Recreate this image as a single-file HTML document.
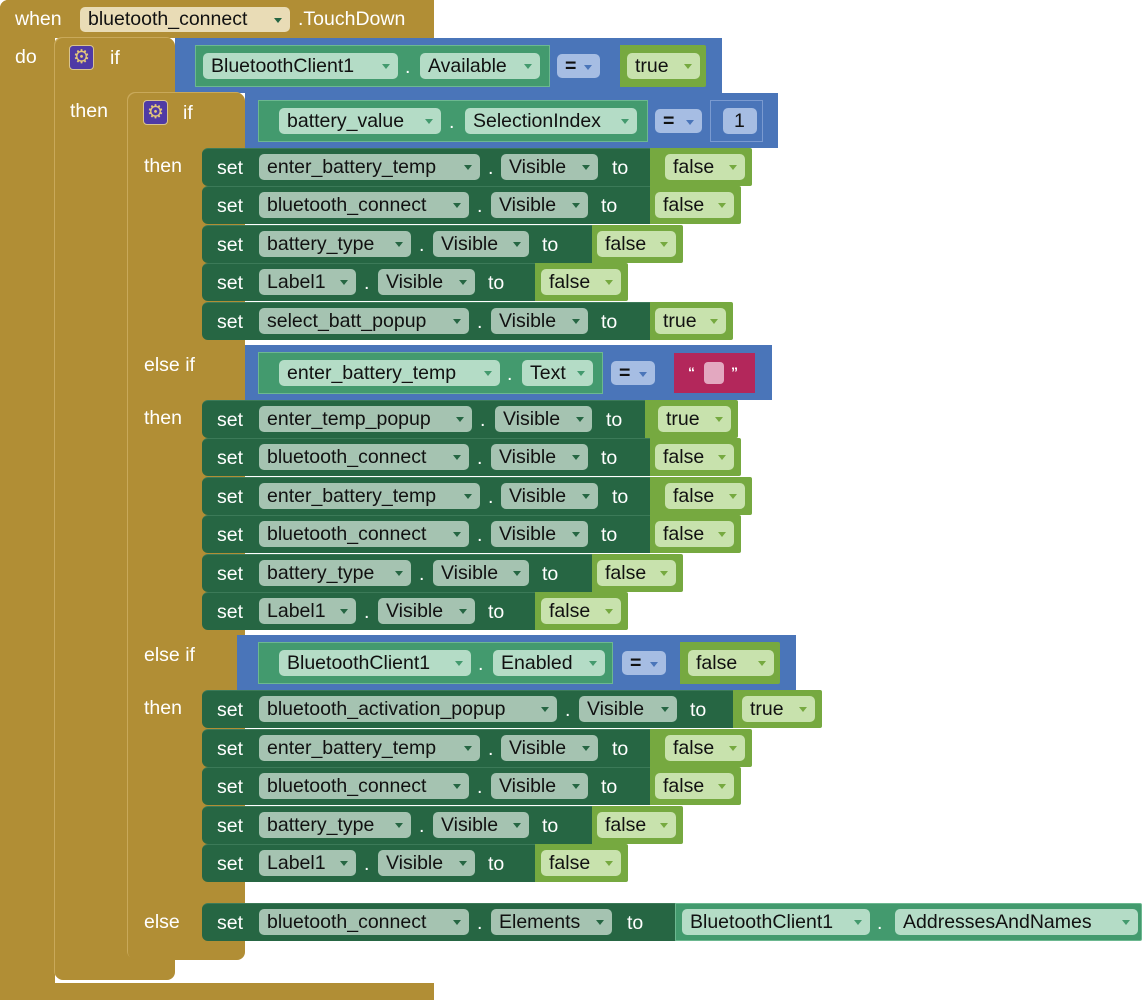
<!DOCTYPE html>
<html><head><meta charset="utf-8"><style>
body{margin:0;width:1146px;height:1000px;position:relative;background:#fff;overflow:hidden;font-family:"Liberation Sans",Arial,sans-serif}
div,span{box-sizing:border-box}
.g{position:absolute;background:#b18e35}
.r{position:absolute;left:0;width:1146px;height:38px}
.set{position:absolute;left:202px;top:0;height:38px;background:#266643;border-radius:6px 0 0 6px;border-top:1px solid #3c7a58}
.t{position:absolute;color:#fff;font-size:19.5px;line-height:24px;top:8px;white-space:nowrap}
.p{position:absolute;top:6px;height:26px;border-radius:5px;background:#a5c3b1;font-size:19.5px;line-height:27px;padding-left:8px;color:#111;white-space:nowrap}
.p::after{content:"";position:absolute;right:8px;top:11px;border-left:4px solid transparent;border-right:4px solid transparent;border-top:5px solid #266643}
.nop::after{display:none}
.bool{position:absolute;top:0;height:38px;background:#76a940;border-radius:0 2px 2px 0}
.bp{background:#c8e2ad}
.bp::after{border-top-color:#76a940}
.cp{background:#b4dcc6}
.cp::after{border-top-color:#439a6e}
.ep{background:#a6bde3}
.ep::after{border-top-color:#4a75b9}
.blue{position:absolute;background:#4a75b9;height:55px}
.comp{position:absolute;background:#439a6e;height:42px;border:1px solid #6cb890}
.gear{position:absolute;width:25px;height:25px;background:#4f3aa5;border:1px solid #d8c490;border-radius:4px;color:#e3c77a;font-family:"DejaVu Sans",sans-serif;font-size:19px;line-height:23px;text-align:center}
.w{position:absolute;color:#fff;font-size:19.5px;line-height:24px}
</style></head><body>

<div class="g" style="left:0;top:0;width:434px;height:38px;border-radius:8px 0 0 0"></div>
<div class="g" style="left:0;top:0;width:55px;height:1000px;border-radius:8px 0 0 0"></div>
<div class="g" style="left:0;top:983px;width:434px;height:17px"></div>
<span class="w" style="left:15px;top:7px">when</span>
<div class="p" style="left:80px;top:7px;width:210px;height:25px;background:#e9dcb6;line-height:25px">bluetooth_connect</div>
<span class="w" style="left:298px;top:7px">.TouchDown</span>
<span class="w" style="left:15px;top:45px">do</span>

<div class="g" style="left:55px;top:38px;width:120px;height:942px;border-radius:8px;box-shadow:-1px -1px 0 #c9a95a"></div>
<div class="gear" style="left:69px;top:45px">⚙</div>
<span class="w" style="left:110px;top:46px">if</span>
<span class="w" style="left:70px;top:99px">then</span>

<div class="blue" style="left:175px;top:38px;width:547px"></div>
<div class="comp" style="left:195px;top:45px;width:355px"></div>
<div class="p cp" style="left:203px;top:53px;width:195px">BluetoothClient1</div>
<span class="w" style="left:405px;top:55px">.</span>
<div class="p cp" style="left:420px;top:53px;width:120px">Available</div>
<div class="p ep" style="left:557px;top:54px;width:43px;height:24px;line-height:24px;font-weight:bold">=</div>
<div class="bool" style="left:620px;top:45px;width:86px;height:42px"></div>
<div class="p bp" style="left:627px;top:53px;width:73px">true</div>

<div class="g" style="left:128px;top:93px;width:117px;height:867px;border-radius:8px;box-shadow:-1px -1px 0 #c9a95a"></div>
<div class="gear" style="left:143px;top:100px">⚙</div>
<span class="w" style="left:183px;top:101px">if</span>

<div class="blue" style="left:245px;top:93px;width:533px"></div>
<div class="comp" style="left:258px;top:100px;width:390px"></div>
<div class="p cp" style="left:279px;top:108px;width:162px">battery_value</div>
<span class="w" style="left:449px;top:110px">.</span>
<div class="p cp" style="left:465px;top:108px;width:172px">SelectionIndex</div>
<div class="p ep" style="left:655px;top:109px;width:47px;height:24px;line-height:24px;font-weight:bold">=</div>
<div style="position:absolute;left:710px;top:100px;width:53px;height:42px;border:1px solid #7a9ad0"></div>
<div class="p ep nop" style="left:723px;top:108px;width:34px;padding-left:11px">1</div>

<div class="blue" style="left:245px;top:345px;width:527px"></div>
<div class="comp" style="left:258px;top:352px;width:345px"></div>
<div class="p cp" style="left:279px;top:360px;width:221px">enter_battery_temp</div>
<span class="w" style="left:507px;top:362px">.</span>
<div class="p cp" style="left:522px;top:360px;width:71px">Text</div>
<div class="p ep" style="left:611px;top:361px;width:44px;height:24px;line-height:24px;font-weight:bold">=</div>
<div style="position:absolute;left:674px;top:353px;width:81px;height:40px;background:#b3275b"></div>
<span class="w" style="left:688px;top:360px;font-size:14px;font-weight:bold">“</span>
<div style="position:absolute;left:704px;top:362px;width:20px;height:22px;background:#e3a8c0;border-radius:4px"></div>
<span class="w" style="left:731px;top:360px;font-size:14px;font-weight:bold">”</span>

<div class="blue" style="left:237px;top:635px;width:559px"></div>
<div class="comp" style="left:258px;top:642px;width:355px"></div>
<div class="p cp" style="left:279px;top:650px;width:192px">BluetoothClient1</div>
<span class="w" style="left:478px;top:652px">.</span>
<div class="p cp" style="left:493px;top:650px;width:112px">Enabled</div>
<div class="p ep" style="left:622px;top:651px;width:44px;height:24px;line-height:24px;font-weight:bold">=</div>
<div class="bool" style="left:680px;top:642px;width:100px;height:42px"></div>
<div class="p bp" style="left:688px;top:650px;width:86px">false</div>

<span class="w" style="left:144px;top:154px">then</span>
<span class="w" style="left:144px;top:353px">else if</span>
<span class="w" style="left:144px;top:406px">then</span>
<span class="w" style="left:144px;top:643px">else if</span>
<span class="w" style="left:144px;top:696px">then</span>
<span class="w" style="left:144px;top:910px">else</span>

<div class="r" style="top:148px"><div class="set" style="width:448px"></div><span class="t" style="left:217px">set</span><div class="p" style="left:259px;width:221px">enter_battery_temp</div><span class="t" style="left:488px">.</span><div class="p" style="left:501px;width:97px">Visible</div><span class="t" style="left:612px">to</span><div class="bool" style="left:650px;width:102px"></div><div class="p bp" style="left:665px;width:80px">false</div></div>
<div class="r" style="top:186px"><div class="set" style="width:448px"></div><span class="t" style="left:217px">set</span><div class="p" style="left:259px;width:210px">bluetooth_connect</div><span class="t" style="left:477px">.</span><div class="p" style="left:491px;width:97px">Visible</div><span class="t" style="left:601px">to</span><div class="bool" style="left:650px;width:91px"></div><div class="p bp" style="left:655px;width:79px">false</div></div>
<div class="r" style="top:225px"><div class="set" style="width:390px"></div><span class="t" style="left:217px">set</span><div class="p" style="left:259px;width:152px">battery_type</div><span class="t" style="left:419px">.</span><div class="p" style="left:433px;width:96px">Visible</div><span class="t" style="left:542px">to</span><div class="bool" style="left:592px;width:91px"></div><div class="p bp" style="left:597px;width:79px">false</div></div>
<div class="r" style="top:263px"><div class="set" style="width:333px"></div><span class="t" style="left:217px">set</span><div class="p" style="left:259px;width:97px">Label1</div><span class="t" style="left:364px">.</span><div class="p" style="left:378px;width:97px">Visible</div><span class="t" style="left:488px">to</span><div class="bool" style="left:535px;width:93px"></div><div class="p bp" style="left:541px;width:80px">false</div></div>
<div class="r" style="top:302px"><div class="set" style="width:448px"></div><span class="t" style="left:217px">set</span><div class="p" style="left:259px;width:210px">select_batt_popup</div><span class="t" style="left:477px">.</span><div class="p" style="left:491px;width:97px">Visible</div><span class="t" style="left:601px">to</span><div class="bool" style="left:650px;width:83px"></div><div class="p bp" style="left:655px;width:71px">true</div></div>

<div class="r" style="top:400px"><div class="set" style="width:443px"></div><span class="t" style="left:217px">set</span><div class="p" style="left:259px;width:213px">enter_temp_popup</div><span class="t" style="left:480px">.</span><div class="p" style="left:495px;width:97px">Visible</div><span class="t" style="left:606px">to</span><div class="bool" style="left:645px;width:93px"></div><div class="p bp" style="left:658px;width:73px">true</div></div>
<div class="r" style="top:438px"><div class="set" style="width:448px"></div><span class="t" style="left:217px">set</span><div class="p" style="left:259px;width:210px">bluetooth_connect</div><span class="t" style="left:477px">.</span><div class="p" style="left:491px;width:97px">Visible</div><span class="t" style="left:601px">to</span><div class="bool" style="left:650px;width:91px"></div><div class="p bp" style="left:655px;width:79px">false</div></div>
<div class="r" style="top:477px"><div class="set" style="width:448px"></div><span class="t" style="left:217px">set</span><div class="p" style="left:259px;width:221px">enter_battery_temp</div><span class="t" style="left:488px">.</span><div class="p" style="left:501px;width:97px">Visible</div><span class="t" style="left:612px">to</span><div class="bool" style="left:650px;width:102px"></div><div class="p bp" style="left:665px;width:80px">false</div></div>
<div class="r" style="top:515px"><div class="set" style="width:448px"></div><span class="t" style="left:217px">set</span><div class="p" style="left:259px;width:210px">bluetooth_connect</div><span class="t" style="left:477px">.</span><div class="p" style="left:491px;width:97px">Visible</div><span class="t" style="left:601px">to</span><div class="bool" style="left:650px;width:91px"></div><div class="p bp" style="left:655px;width:79px">false</div></div>
<div class="r" style="top:554px"><div class="set" style="width:390px"></div><span class="t" style="left:217px">set</span><div class="p" style="left:259px;width:152px">battery_type</div><span class="t" style="left:419px">.</span><div class="p" style="left:433px;width:96px">Visible</div><span class="t" style="left:542px">to</span><div class="bool" style="left:592px;width:91px"></div><div class="p bp" style="left:597px;width:79px">false</div></div>
<div class="r" style="top:592px"><div class="set" style="width:333px"></div><span class="t" style="left:217px">set</span><div class="p" style="left:259px;width:97px">Label1</div><span class="t" style="left:364px">.</span><div class="p" style="left:378px;width:97px">Visible</div><span class="t" style="left:488px">to</span><div class="bool" style="left:535px;width:93px"></div><div class="p bp" style="left:541px;width:80px">false</div></div>

<div class="r" style="top:690px"><div class="set" style="width:531px"></div><span class="t" style="left:217px">set</span><div class="p" style="left:259px;width:298px">bluetooth_activation_popup</div><span class="t" style="left:565px">.</span><div class="p" style="left:579px;width:98px">Visible</div><span class="t" style="left:690px">to</span><div class="bool" style="left:733px;width:89px"></div><div class="p bp" style="left:742px;width:73px">true</div></div>
<div class="r" style="top:729px"><div class="set" style="width:448px"></div><span class="t" style="left:217px">set</span><div class="p" style="left:259px;width:221px">enter_battery_temp</div><span class="t" style="left:488px">.</span><div class="p" style="left:501px;width:97px">Visible</div><span class="t" style="left:612px">to</span><div class="bool" style="left:650px;width:102px"></div><div class="p bp" style="left:665px;width:80px">false</div></div>
<div class="r" style="top:767px"><div class="set" style="width:448px"></div><span class="t" style="left:217px">set</span><div class="p" style="left:259px;width:210px">bluetooth_connect</div><span class="t" style="left:477px">.</span><div class="p" style="left:491px;width:97px">Visible</div><span class="t" style="left:601px">to</span><div class="bool" style="left:650px;width:91px"></div><div class="p bp" style="left:655px;width:79px">false</div></div>
<div class="r" style="top:806px"><div class="set" style="width:390px"></div><span class="t" style="left:217px">set</span><div class="p" style="left:259px;width:152px">battery_type</div><span class="t" style="left:419px">.</span><div class="p" style="left:433px;width:96px">Visible</div><span class="t" style="left:542px">to</span><div class="bool" style="left:592px;width:91px"></div><div class="p bp" style="left:597px;width:79px">false</div></div>
<div class="r" style="top:844px"><div class="set" style="width:333px"></div><span class="t" style="left:217px">set</span><div class="p" style="left:259px;width:97px">Label1</div><span class="t" style="left:364px">.</span><div class="p" style="left:378px;width:97px">Visible</div><span class="t" style="left:488px">to</span><div class="bool" style="left:535px;width:93px"></div><div class="p bp" style="left:541px;width:80px">false</div></div>

<div class="r" style="top:903px"><div class="set" style="width:473px"></div><span class="t" style="left:217px">set</span><div class="p" style="left:259px;width:210px">bluetooth_connect</div><span class="t" style="left:477px">.</span><div class="p" style="left:491px;width:121px">Elements</div><span class="t" style="left:627px">to</span><div class="bool" style="left:675px;width:467px;background:#439a6e;border:1px solid #6cb890"></div><div class="p cp" style="left:682px;width:188px">BluetoothClient1</div><span class="t" style="left:877px">.</span><div class="p cp" style="left:895px;width:243px">AddressesAndNames</div></div>

</body></html>
